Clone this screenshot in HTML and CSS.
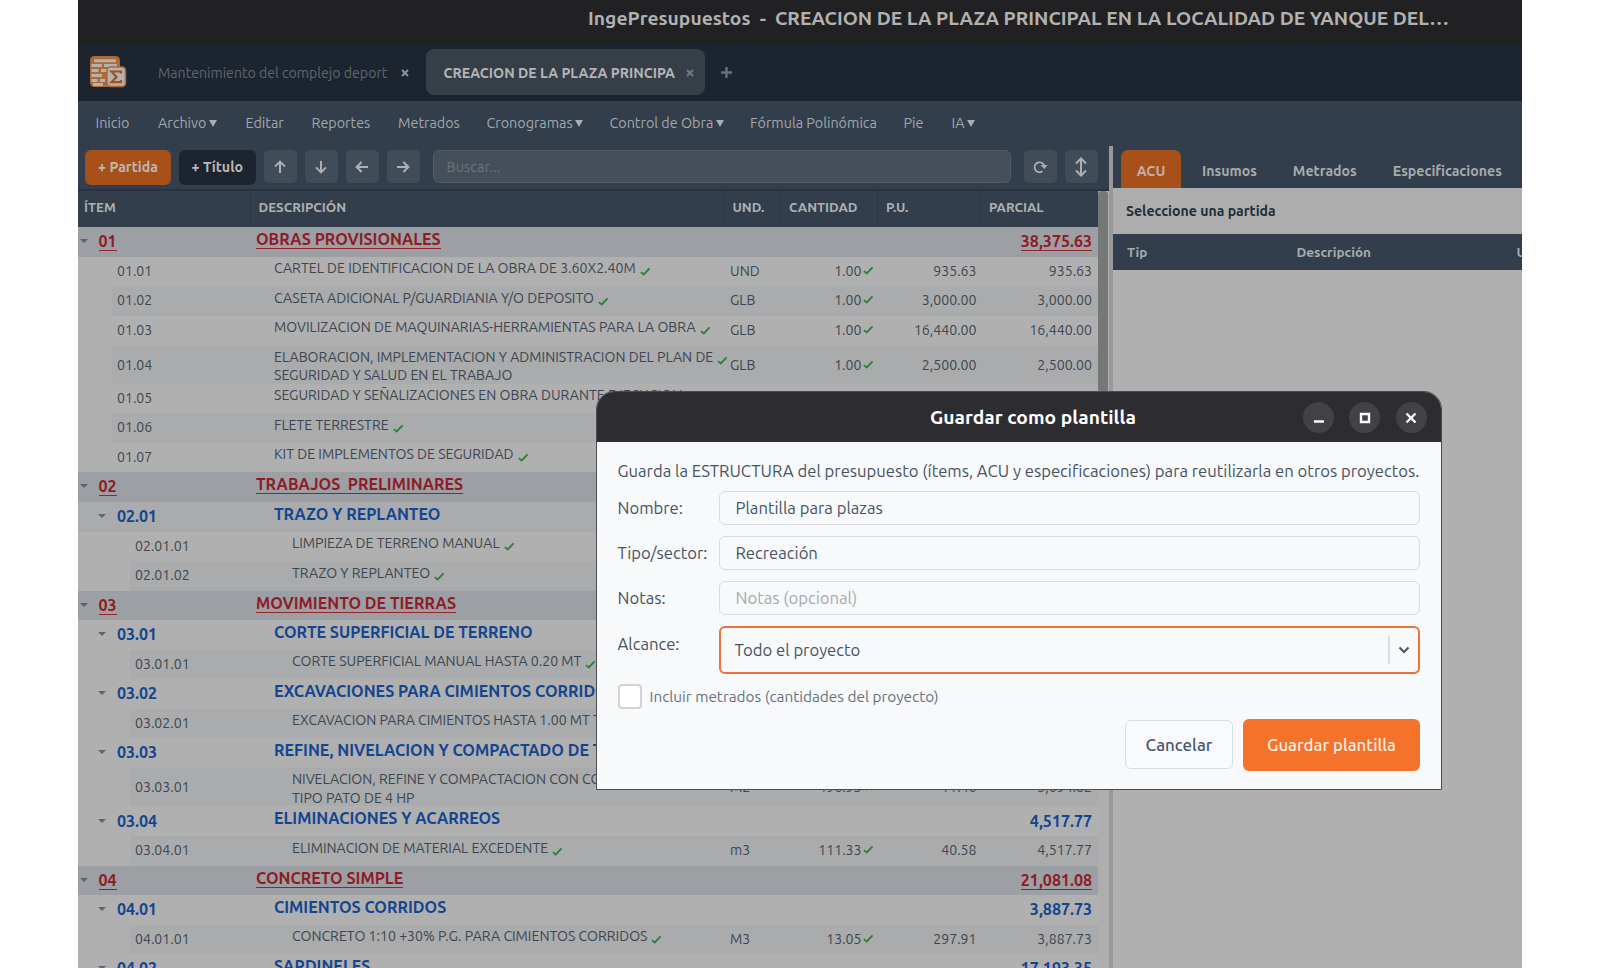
FILE: index.html
```html
<!DOCTYPE html>
<html lang="es">
<head>
<meta charset="utf-8">
<title>IngePresupuestos</title>
<link rel="stylesheet" href="styles.css">
</head>
<body>
<svg class="defs" width="0" height="0"><defs>
<symbol id="check" viewBox="0 0 11 9"><path d="M.9 5.1 3.9 7.6 10 1.2" fill="none" stroke="#2f7f3a" stroke-width="1.9"/></symbol>
<symbol id="arrow" viewBox="0 0 14 14"><path d="M7 13V2M2 6.600 7 1.600l5 5" fill="none" stroke="#adafb0" stroke-width="2"/></symbol>
</defs></svg>
<div class="app">
  <header class="titlebar">IngePresupuestos&nbsp; -&nbsp; CREACION DE LA PLAZA PRINCIPAL EN LA LOCALIDAD DE YANQUE DEL…</header>
  <div class="tabs">
    <svg class="logo" width="38" height="34" viewBox="0 0 38 34">
      <rect x="1" y="1" width="30" height="31" rx="4.500" fill="#ad6a38"/>
      <path d="M5 5.700h22M2.500 10.500h10.500M15 10.500h13M2.500 15.500h7M12 15.500h9M2.500 20.500h10.500M2.500 25.500h6M11 25.500h5M4 29.500h10" stroke="#b6b1ac" stroke-width="3" fill="none"/>
      <rect x="18" y="12" width="18.500" height="19.500" rx="3.500" fill="#b6b1ac" stroke="#ad6a38" stroke-width="1.500"/>
      <path d="M32 18.500V16.500H22.500L27.500 22L22.500 27.200H32V25" fill="none" stroke="#9a5527" stroke-width="2.200"/>
    </svg>
    <div class="tab"><span>Mantenimiento del complejo deport</span><svg class="x" width="8" height="8" viewBox="0 0 8 8"><path d="M1 1l6 6M7 1 1 7" stroke="#8b9095" stroke-width="2.200"/></svg></div>
    <div class="tab active"><span>CREACION DE LA PLAZA PRINCIPA</span><svg class="x" width="8" height="8" viewBox="0 0 8 8"><path d="M1 1l6 6M7 1 1 7" stroke="#73787e" stroke-width="2"/></svg></div>
    <svg class="plus" width="11" height="11" viewBox="0 0 11 11"><path d="M5.500 0v11M0 5.500h11" stroke="#687178" stroke-width="2.400"/></svg>
  </div>
  <nav class="menu">
    <span class="m1">Inicio</span><span class="m2">Archivo <i></i></span><span class="m3">Editar</span><span class="m4">Reportes</span><span class="m5">Metrados</span><span class="m6">Cronogramas <i></i></span><span class="m7">Control de Obra <i></i></span><span class="m8">Fórmula Polinómica</span><span class="m9">Pie</span><span>IA <i></i></span>
  </nav>
  <div class="work">
    <section class="left">
      <div class="toolbar">
        <button class="btn primary">+ Partida</button>
        <button class="btn dark">+ Título</button>
        <button class="sq"><svg width="14" height="14"><use href="#arrow"/></svg></button>
        <button class="sq down"><svg width="14" height="14"><use href="#arrow"/></svg></button>
        <button class="sq back"><svg width="14" height="14"><use href="#arrow"/></svg></button>
        <button class="sq fwd"><svg width="14" height="14"><use href="#arrow"/></svg></button>
        <div class="search">Buscar...</div>
        <button class="sq"><svg width="15" height="14" viewBox="0 0 15 14"><path d="M9.500 11.300A5 5 0 1 1 11.400 6" fill="none" stroke="#adafb0" stroke-width="1.700"/><path d="M7.500 5h7l-3.200 4z" fill="#adafb0"/></svg></button>
        <button class="sq last"><svg width="14" height="20" viewBox="0 0 14 20"><path d="M7 2v16M2 6.500l5-5 5 5M2 13.500l5 5 5-5" fill="none" stroke="#adafb0" stroke-width="2"/></svg></button>
      </div>
      <div class="tablewrap">
        <div class="table">
          <div class="thead"><span>ÍTEM</span><span>DESCRIPCIÓN</span><span>UND.</span><span>CANTIDAD</span><span>P.U.</span><span>PARCIAL</span></div>
          <div class="row t1"><b class="it"><i></i><u>01</u></b><b class="de"><u>OBRAS PROVISIONALES</u></b><b class="pa"><u>38,375.63</u></b></div>
          <div class="row l2"><span class="it">01.01</span><span class="de">CARTEL DE IDENTIFICACION DE LA OBRA DE 3.60X2.40M<svg><use href="#check"/></svg></span><span>UND</span><span class="nu">1.00<svg><use href="#check"/></svg></span><span class="nu">935.63</span><span class="pa">935.63</span></div>
          <div class="row l2 alt"><span class="it">01.02</span><span class="de">CASETA ADICIONAL P/GUARDIANIA Y/O DEPOSITO<svg><use href="#check"/></svg></span><span>GLB</span><span class="nu">1.00<svg><use href="#check"/></svg></span><span class="nu">3,000.00</span><span class="pa">3,000.00</span></div>
          <div class="row l2"><span class="it">01.03</span><span class="de">MOVILIZACION DE MAQUINARIAS-HERRAMIENTAS PARA LA OBRA<svg><use href="#check"/></svg></span><span>GLB</span><span class="nu">1.00<svg><use href="#check"/></svg></span><span class="nu">16,440.00</span><span class="pa">16,440.00</span></div>
          <div class="row l2 alt tall"><span class="it">01.04</span><span class="de">ELABORACION, IMPLEMENTACION Y ADMINISTRACION DEL PLAN DE<svg><use href="#check"/></svg><br>SEGURIDAD Y SALUD EN EL TRABAJO</span><span>GLB</span><span class="nu">1.00<svg><use href="#check"/></svg></span><span class="nu">2,500.00</span><span class="pa">2,500.00</span></div>
          <div class="row l2"><span class="it">01.05</span><span class="de">SEGURIDAD Y SEÑALIZACIONES EN OBRA DURANTE EJECUCION</span></div>
          <div class="row l2 alt"><span class="it">01.06</span><span class="de">FLETE TERRESTRE<svg><use href="#check"/></svg></span></div>
          <div class="row l2"><span class="it">01.07</span><span class="de">KIT DE IMPLEMENTOS DE SEGURIDAD<svg><use href="#check"/></svg></span></div>
          <div class="row t1"><b class="it"><i></i><u>02</u></b><b class="de"><u>TRABAJOS&nbsp; PRELIMINARES</u></b></div>
          <div class="row t2 shade"><b class="it"><i></i>02.01</b><b class="de">TRAZO Y REPLANTEO</b></div>
          <div class="row l3"><span class="it">02.01.01</span><span class="de">LIMPIEZA DE TERRENO MANUAL<svg><use href="#check"/></svg></span></div>
          <div class="row l3 alt"><span class="it">02.01.02</span><span class="de">TRAZO Y REPLANTEO<svg><use href="#check"/></svg></span></div>
          <div class="row t1"><b class="it"><i></i><u>03</u></b><b class="de"><u>MOVIMIENTO DE TIERRAS</u></b></div>
          <div class="row t2"><b class="it"><i></i>03.01</b><b class="de">CORTE SUPERFICIAL DE TERRENO</b></div>
          <div class="row l3 alt"><span class="it">03.01.01</span><span class="de">CORTE SUPERFICIAL MANUAL HASTA 0.20 MT<svg><use href="#check"/></svg></span></div>
          <div class="row t2"><b class="it"><i></i>03.02</b><b class="de">EXCAVACIONES PARA CIMIENTOS CORRIDOS</b></div>
          <div class="row l3 alt"><span class="it">03.02.01</span><span class="de">EXCAVACION PARA CIMIENTOS HASTA 1.00 MT T</span></div>
          <div class="row t2"><b class="it"><i></i>03.03</b><b class="de">REFINE, NIVELACION Y COMPACTADO DE T</b></div>
          <div class="row l3 alt tall"><span class="it">03.03.01</span><span class="de">NIVELACION, REFINE Y COMPACTACION CON CO<br>TIPO PATO DE 4 HP</span><span>M2</span><span class="nu">496.93<svg><use href="#check"/></svg></span><span class="nu">11.46</span><span class="pa">5,694.82</span></div>
          <div class="row t2"><b class="it"><i></i>03.04</b><b class="de">ELIMINACIONES Y ACARREOS</b><b class="pa">4,517.77</b></div>
          <div class="row l3 alt"><span class="it">03.04.01</span><span class="de">ELIMINACION DE MATERIAL EXCEDENTE<svg><use href="#check"/></svg></span><span>m3</span><span class="nu">111.33<svg><use href="#check"/></svg></span><span class="nu">40.58</span><span class="pa">4,517.77</span></div>
          <div class="row t1"><b class="it"><i></i><u>04</u></b><b class="de"><u>CONCRETO SIMPLE</u></b><b class="pa"><u>21,081.08</u></b></div>
          <div class="row t2"><b class="it"><i></i>04.01</b><b class="de">CIMIENTOS CORRIDOS</b><b class="pa">3,887.73</b></div>
          <div class="row l3 alt"><span class="it">04.01.01</span><span class="de">CONCRETO 1:10 +30% P.G. PARA CIMIENTOS CORRIDOS<svg><use href="#check"/></svg></span><span>M3</span><span class="nu">13.05<svg><use href="#check"/></svg></span><span class="nu">297.91</span><span class="pa">3,887.73</span></div>
          <div class="row t2"><b class="it"><i></i>04.02</b><b class="de">SARDINELES</b><b class="pa">17,193.35</b></div>
        </div>
        <div class="scroll"><div class="thumb"></div></div>
      </div>
    </section>
    <div class="splitter"></div>
    <section class="right">
      <div class="rtabs"><span class="on">ACU</span><span>Insumos</span><span>Metrados</span><span>Especificaciones</span></div>
      <div class="select">Seleccione una partida</div>
      <div class="rhead"><span>Tip</span><span>Descripción</span><span>U</span></div>
    </section>
  </div>
  <div class="dialog">
    <div class="dhead">
      <span class="dtitle">Guardar como plantilla</span>
      <div class="ctl"><svg width="12" height="12"><path d="M1 9.500h10" stroke="#fff" stroke-width="2.400"/></svg></div>
      <div class="ctl"><svg width="12" height="12"><path d="M2 2h8v8H2z" fill="none" stroke="#fff" stroke-width="2.400"/></svg></div>
      <div class="ctl"><svg width="12" height="12"><path d="M1.500 1.500l9 9M10.500 1.500l-9 9" stroke="#fff" stroke-width="2.400"/></svg></div>
    </div>
    <div class="dbody">
      <p class="intro">Guarda la ESTRUCTURA del presupuesto (ítems, ACU y especificaciones) para reutilizarla en otros proyectos.</p>
      <div class="field"><label>Nombre:</label><div class="input">Plantilla para plazas</div></div>
      <div class="field"><label>Tipo/sector:</label><div class="input">Recreación</div></div>
      <div class="field"><label>Notas:</label><div class="input ph">Notas (opcional)</div></div>
      <div class="field"><label>Alcance:</label><div class="combo"><span>Todo el proyecto</span><svg width="12" height="8" viewBox="0 0 12 8"><path d="M1.500 1.500 6 6l4.500-4.500" fill="none" stroke="#475569" stroke-width="2.100"/></svg></div></div>
      <div class="checkrow"><div class="box"></div>Incluir metrados (cantidades del proyecto)</div>
      <div class="actions"><button class="cancel">Cancelar</button><button class="save">Guardar plantilla</button></div>
    </div>
  </div>
</div>
</body>
</html>
```
FILE: styles.css
```css
* { box-sizing: border-box; }
body { margin: 0; background: #fff; height: 968px; overflow: hidden; font-family: Ubuntu, "Noto Sans", sans-serif; }
button { border: 0; margin: 0; padding: 0; font-family: inherit; flex: none; }
.defs { position: absolute; }
.app { position: relative; width: 1444px; height: 968px; margin-left: 78px; overflow: hidden; background: #b0b0b0; display: flex; flex-direction: column; }
.titlebar { height: 43.500px; flex: none; padding-left: 510px; background: #212123; color: #b1b1b1; font-weight: 700; font-size: 19.250px; line-height: 37px; white-space: nowrap; }
.tabs { height: 57px; flex: none; background: #1c2430; display: flex; align-items: center; padding-left: 11px; }
.logo { margin-right: 14px; flex: none; }
.tab { height: 46px; display: flex; align-items: center; justify-content: space-between; width: 279.500px; padding: 1px 11px 0 18px; color: #5f666e; font-size: 14.150px; white-space: nowrap; }
.tab:not(.active) { width: 284.500px; padding: 1px 17px 0 17px; }
.tab.active { background: #363e48; border-radius: 8px; color: #b3b5b6; font-weight: 700; font-size: 14.100px; }
.plus { margin-left: 15.500px; }
.menu { height: 45px; flex: none; background: #323e4c; display: flex; align-items: center; padding: 0 0 0 17.500px; color: #a2a7ab; font-size: 14.350px; white-space: nowrap; }
.menu i { display: inline-block; margin-left: -1px; border: 4px solid transparent; border-top: 7px solid #a9acaf; border-bottom: 0; vertical-align: 1px; }
.m1 { width: 62.500px; } .m2 { width: 87.500px; } .m3 { width: 66px; } .m4 { width: 86.500px; } .m5 { width: 88.500px; } .m6 { width: 123px; } .m7 { width: 140.500px; } .m8 { width: 153.500px; } .m9 { width: 48px; }
.work { flex: 1; display: flex; min-height: 0; }
.left { width: 1031px; flex: none; display: flex; flex-direction: column; }
.toolbar { height: 45px; flex: none; background: #323e4c; border-bottom: 2px solid #28333f; display: flex; align-items: flex-start; gap: 8px; padding: 4.500px 0 0 7px; }
.btn { height: 35px; border-radius: 6px; color: #bcb8b4; font-weight: 700; font-size: 14.200px; padding-bottom: 1px; }
.primary { width: 86px; background: #a8501a; }
.dark { width: 76.500px; background: #1c2430; }
.sq { width: 33px; height: 33px; border-radius: 5px; background: #404c57; display: flex; align-items: center; justify-content: center; }
.down svg { transform: rotate(180deg); } .back svg { transform: rotate(-90deg); } .fwd svg { transform: rotate(90deg); }
.search { width: 578.500px; height: 33px; margin: 0 4.500px 0 5px; border: 1px solid #505c66; border-radius: 6px; background: #444f59; color: #6b747c; font-size: 14.350px; line-height: 32px; padding-left: 13px; letter-spacing: .1px; }
.tablewrap { flex: 1; display: flex; min-height: 0; background: #b0b0b0; }
.table { width: 1019.500px; flex: none; overflow: hidden; }
.scroll { width: 10.500px; background: #aeaeae; }
.thumb { height: 530px; background: #767878; border-radius: 4px 4px 0 0; }
.thead { height: 36.500px; display: grid; grid-template-columns: 171.500px 474px 56.500px 97px 103px 1fr; background: #323e4c; color: #adb0b2; font-weight: 700; font-size: 13.300px; line-height: 34px; }
.thead span { padding-left: 8px; border-left: 1px solid #2c3743; }
.thead span:first-child { padding-left: 6px; border: 0; }
.row { height: 29.550px; display: grid; grid-template-columns: 178px 474px 60px 83.500px 103px 1fr; align-items: center; color: #3d4650; font-size: 14.100px; white-space: nowrap; padding-bottom: 1.500px; }
.tall { height: 38.600px; }
.row b { font-size: 16.050px; }
.row .de { align-self: start; padding-top: 2.500px; line-height: 18.200px; }
.row b.de { padding-top: 3px; }
.row svg { width: 10.500px; height: 9px; display: inline-block; }
.de svg { margin-left: 4px; vertical-align: -3px; }
.nu { text-align: right; }
.nu svg { margin-left: 1.500px; vertical-align: 1px; }
.pa { text-align: right; padding-right: 5.500px; grid-column: 6; }
.it i { display: inline-block; border: 4.500px solid transparent; border-top: 4.500px solid #5d646c; border-bottom: 0; vertical-align: 4px; margin: 0 10.500px 0 2px; }
.row u { text-decoration: none; border-bottom: 1.500px solid #96242b; }
.t1 { background: #9c9fa4; color: #8f1c24; }
.t2 { color: #14458f; }
.t2 .it i { margin: 0 11px 0 20px; }
.shade { background: #a9abac; }
.t2 .de, .l2 .de { padding-left: 18px; }
.l3 .de { padding-left: 36px; }
.l2 .it { padding-left: 39px; }
.l3 .it { padding-left: 57px; }
.l2.alt { background: linear-gradient(to right, #b0b0b0 34px, #a9abac 34px); }
.l3.alt { background: linear-gradient(to right, #b0b0b0 52px, #a9abac 52px); }
.splitter { width: 4px; background: #989898; flex: none; }
.right { flex: 1; display: flex; flex-direction: column; min-width: 0; overflow: hidden; background: #b0b0b0; }
.rtabs { height: 42.500px; flex: none; background: #323e4c; display: flex; padding: 4.500px 0 0 8px; color: #a7abad; font-weight: 700; font-size: 14.150px; line-height: 42px; white-space: nowrap; }
.rtabs span { margin-right: 36px; flex: none; }
.rtabs .on { width: 60px; margin-right: 21px; text-align: center; background: #a8501a; color: #bfb2a8; border-radius: 7px 7px 0 0; }
.select { height: 46px; flex: none; padding-left: 13px; background: #adadad; color: #222e3b; font-weight: 700; font-size: 14.100px; line-height: 46px; }
.rhead { height: 36px; flex: none; background: #323e4c; color: #a7abad; font-weight: 700; font-size: 13.500px; line-height: 37px; display: grid; grid-template-columns: 169.500px 220px 40px; padding-left: 14px; }
.dialog { position: absolute; left: 518px; top: 391px; width: 845.500px; height: 399px; border: 1px solid #4a4c50; border-radius: 18px 18px 0 0; background: #f7f9fb; overflow: hidden; display: flex; flex-direction: column; }
.dhead { height: 50px; flex: none; background: #2d2c31; display: flex; align-items: center; padding: 1px 14px 0 333px; gap: 15.200px; }
.dtitle { flex: 1; color: #fff; font-weight: 700; font-size: 19.250px; padding-bottom: 1px; }
.ctl { width: 31px; height: 31px; border-radius: 50%; background: #424146; display: flex; align-items: center; justify-content: center; }
.dbody { padding: 14px 20.500px 0; color: #465362; font-size: 16.660px; display: flex; flex-direction: column; }
.intro { margin: 0 0 6px; height: 29px; line-height: 29px; white-space: nowrap; }
.field { display: grid; grid-template-columns: 101.500px 1fr; margin-bottom: 10.500px; line-height: 34px; }
.input { height: 34.400px; border: 1.500px solid #d9dbde; border-radius: 6px; padding-left: 15.500px; line-height: 32px; }
.ph { color: #a5aab0; }
.combo { height: 48px; border: 2px solid #e8733a; border-radius: 6px; padding-left: 13.500px; line-height: 44px; display: flex; align-items: center; }
.combo span { flex: 1; }
.combo svg { box-sizing: content-box; padding: 10px 8px; border-left: 2px solid #dcdee1; flex: none; }
.field:has(.combo) { line-height: 35px; margin-bottom: 10.500px; }
.checkrow { display: flex; align-items: center; gap: 7.500px; height: 25px; font-size: 15.350px; color: #66727f; }
.box { width: 24.500px; height: 24.500px; border: 2px solid #d2d4d4; border-radius: 4px; background: #fff; }
.actions { display: flex; justify-content: flex-end; align-items: center; gap: 10px; margin-top: 10px; }
.actions button { font-size: 16.850px; font-weight: 500; border-radius: 6px; }
.cancel { width: 108px; height: 49px; background: #f9fafc; border: 1.500px solid #dadcdf; color: #465568; }
.save { width: 177px; height: 51.500px; background: #f47229; color: #fdeee4; }
```
